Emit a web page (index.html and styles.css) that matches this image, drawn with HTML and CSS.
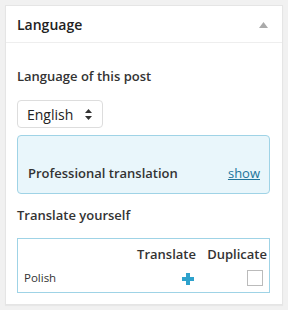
FILE: index.html
```html
<!DOCTYPE html>
<html lang="en">

<head>
    <meta charset="UTF-8">
    <title>Language</title>
    <link rel="stylesheet" href="styles.css">
</head>

<body>
    <div class="postbox">
        <div class="postbox-header">
            <h3>Language</h3>
            <svg class="toggle" width="9" height="6" viewBox="0 0 9 6"><path d="M4.5 0 L9 6 L0 6 Z" fill="#aaa"/></svg>
        </div>
        <div class="inside">
            <p class="label">Language of this post</p>
            <div class="select">
                <span>English</span>
                <svg width="7" height="11" viewBox="0 0 7 11"><path d="M3.5 0 L7 4 L0 4 Z M0 7 L7 7 L3.5 11 Z" fill="#333"/></svg>
            </div>
            <div class="pro-box">
                <strong>Professional translation</strong>
                <a href="#">show</a>
            </div>
            <p class="label label-yourself">Translate yourself</p>
            <table class="translations">
                <thead>
                    <tr>
                        <th></th>
                        <th class="col-translate">Translate</th>
                        <th class="col-duplicate">Duplicate</th>
                    </tr>
                </thead>
                <tbody>
                    <tr>
                        <td>Polish</td>
                        <td class="col-translate">
                            <svg width="12" height="12" viewBox="0 0 12 12"><path d="M4 0 H8 V4 H12 V8 H8 V12 H4 V8 H0 V4 H4 Z" fill="#2ea2cc"/></svg>
                        </td>
                        <td class="col-duplicate"><span class="checkbox"></span></td>
                    </tr>
                </tbody>
            </table>
        </div>
    </div>
</body>

</html>
```

FILE: styles.css
```css
body {
    margin: 0;
    padding: 5px;
    background-color: #f1f1f1;
    font-family: "Open Sans", sans-serif;
    color: #333;
}

.postbox {
    width: 278px;
    box-sizing: border-box;
    background-color: #fff;
    border: 1px solid #e5e5e5;
    box-shadow: 0 1px 1px rgba(0, 0, 0, 0.04);
}

.postbox-header {
    height: 36px;
    display: flex;
    align-items: center;
    justify-content: space-between;
    padding: 0 14px 0 11px;
    border-bottom: 1px solid #eee;
}

.postbox-header h3 {
    margin: 0;
    font-size: 14px;
    font-weight: 600;
    color: #222;
}

.toggle {
    margin-top: 1px;
}

.inside {
    padding: 0 12px 11px 11px;
}

.label {
    margin: 23px 0 0;
    font-size: 13px;
    font-weight: 600;
    line-height: 20px;
    color: #333;
}

.select {
    margin-top: 14px;
    width: 86px;
    height: 28px;
    box-sizing: border-box;
    display: flex;
    align-items: center;
    justify-content: space-between;
    padding: 0 10px 0 9px;
    border: 1px solid #ddd;
    border-radius: 4px;
    font-size: 14px;
    color: #222;
}

.pro-box {
    margin-top: 7px;
    height: 59px;
    box-sizing: border-box;
    display: flex;
    align-items: flex-end;
    justify-content: space-between;
    padding: 0 9px 10px 10px;
    background-color: #e9f6fb;
    border: 1px solid #9fd3e6;
    border-radius: 4px;
    font-size: 13px;
    line-height: 20px;
}

.pro-box strong {
    font-weight: 600;
    color: #333;
}

.pro-box a {
    color: #21759b;
}

.label-yourself {
    margin-top: 11px;
}

.translations {
    margin-top: 13px;
    width: 100%;
    height: 55px;
    border: 1px solid #9fd3e6;
    border-collapse: collapse;
}

.translations th,
.translations td {
    padding: 0;
}

.translations th {
    height: 24px;
    font-size: 13px;
    font-weight: 600;
    color: #333;
    vertical-align: bottom;
}

.translations td {
    font-size: 11.5px;
    height: 28px;
    padding-left: 6px;
    vertical-align: middle;
}

.translations .col-translate {
    width: 60px;
    text-align: right;
    padding-right: 1px;
}

.translations td.col-translate {
    padding-right: 3px;
}

.translations .col-duplicate {
    width: 60px;
    text-align: right;
    padding-right: 2px;
}

.translations td.col-duplicate {
    padding-right: 6px;
}

.checkbox {
    display: inline-block;
    width: 16px;
    height: 16px;
    box-sizing: border-box;
    border: 1px solid #bbb;
    vertical-align: middle;
}

.translations svg {
    vertical-align: middle;
}
```
